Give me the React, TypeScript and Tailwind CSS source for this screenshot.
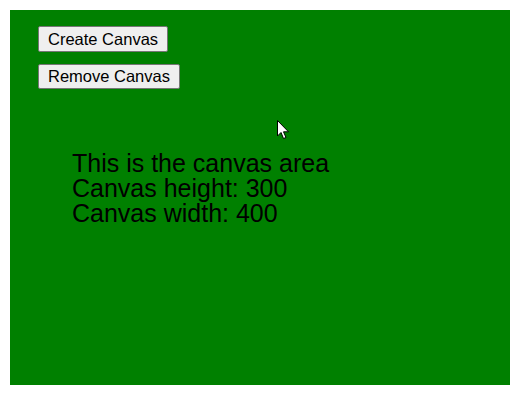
export default function App() {
  return (
    <div className="min-h-[405px] bg-white p-[10px] font-['Liberation_Sans',Arial,sans-serif]">
      <div className="relative h-[375px] w-[500px] bg-[#008000] pl-[28px] pt-[16px]">
        <div className="flex flex-col items-start gap-[12px]">
          <button className="h-[26px] rounded-[2px] border border-[#767676] bg-[#efefef] px-[9px] text-[16.5px] leading-none text-black">
            Create Canvas
          </button>
          <button className="h-[25px] rounded-[2px] border border-[#767676] bg-[#efefef] px-[9px] text-[16.5px] leading-none text-black">
            Remove Canvas
          </button>
        </div>
        <div className="ml-[34px] mt-[62px] text-[25px] leading-[25px] text-black">
          <div>This is the canvas area</div>
          <div>Canvas height: 300</div>
          <div>Canvas width: 400</div>
        </div>
        <svg
          className="absolute left-[267px] top-[110px]"
          width="13"
          height="20"
          viewBox="0 0 13 20"
        >
          <path
            d="M0.5 0.5 L0.5 16 L4 12.5 L6.5 18.5 L9 17.5 L6.5 11.8 L11.5 11.8 Z"
            fill="#fff"
            stroke="#000"
            strokeWidth="1"
            strokeLinejoin="round"
          />
        </svg>
      </div>
    </div>
  );
}
